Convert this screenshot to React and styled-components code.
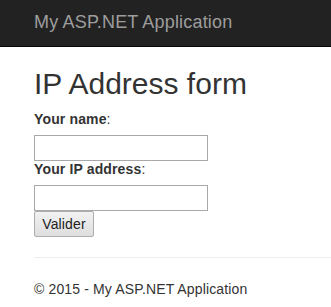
import React from 'react';
import styled, { createGlobalStyle } from 'styled-components';

const GlobalStyle = createGlobalStyle`
  html, body {
    margin: 0;
    padding: 0;
    background: #fff;
  }
  body {
    font-family: "Liberation Sans", Arial, sans-serif;
    font-size: 14px;
    line-height: 20px;
    letter-spacing: 0.14px;
    color: #333;
  }
`;

const Navbar = styled('nav')`
  height: 46px;
  padding: 0 34px;
  background: #222;
  border-bottom: 1px solid #080808;
`;

const Brand = styled('a')`
  display: block;
  padding-top: 12px;
  font-size: 18px;
  line-height: 20px;
  letter-spacing: 0.18px;
  color: #9d9d9d;
  text-decoration: none;
  white-space: nowrap;
`;

const Body = styled('main')`
  padding-left: 34px;
`;

const Title = styled('h2')`
  margin: 20px 0 11px;
  font-size: 30px;
  font-weight: 500;
  line-height: 1.1;
  letter-spacing: 0;
  color: #333;
`;

const Form = styled('form')`
  display: flex;
  flex-direction: column;
  align-items: flex-start;
`;

const Label = styled('label')`
  display: block;
  margin-bottom: 8px;
  line-height: 16px;

  b {
    font-weight: bold;
  }
`;

const TextInput = styled('input')`
  box-sizing: border-box;
  width: 174px;
  height: 26px;
  margin: 0;
  padding: 2px 4px;
  border: 1px solid #a9a9a9;
  border-radius: 0;
  font: inherit;
  color: #333;
  background: #fff;
  outline: none;
`;

const SubmitButton = styled('button')`
  box-sizing: border-box;
  width: 60px;
  height: 26px;
  margin: 0;
  padding: 0;
  border: 1px solid #adadad;
  border-radius: 2px;
  background: linear-gradient(#f2f2f2, #dedede);
  font-family: "Liberation Sans", Arial, sans-serif;
  font-size: 14px;
  letter-spacing: 0.14px;
  color: #222;
`;

const Rule = styled('hr')`
  margin: 20px 0 21px;
  border: 0;
  border-top: 1px solid #eee;
`;

const Footer = styled('footer')`
  p {
    margin: 0 0 10px;
  }
`;

const App = () => (
  <>
    <GlobalStyle />
    <Navbar>
      <Brand href="#">My ASP.NET Application</Brand>
    </Navbar>
    <Body>
      <Title>IP Address form</Title>
      <Form onSubmit={(e) => e.preventDefault()}>
        <Label htmlFor="name">
          <b>Your name</b>:
        </Label>
        <TextInput id="name" type="text" />
        <Label htmlFor="ip">
          <b>Your IP address</b>:
        </Label>
        <TextInput id="ip" type="text" />
        <SubmitButton type="submit">Valider</SubmitButton>
      </Form>
      <Rule />
      <Footer>
        <p>© 2015 - My ASP.NET Application</p>
      </Footer>
    </Body>
  </>
);

export default App;
